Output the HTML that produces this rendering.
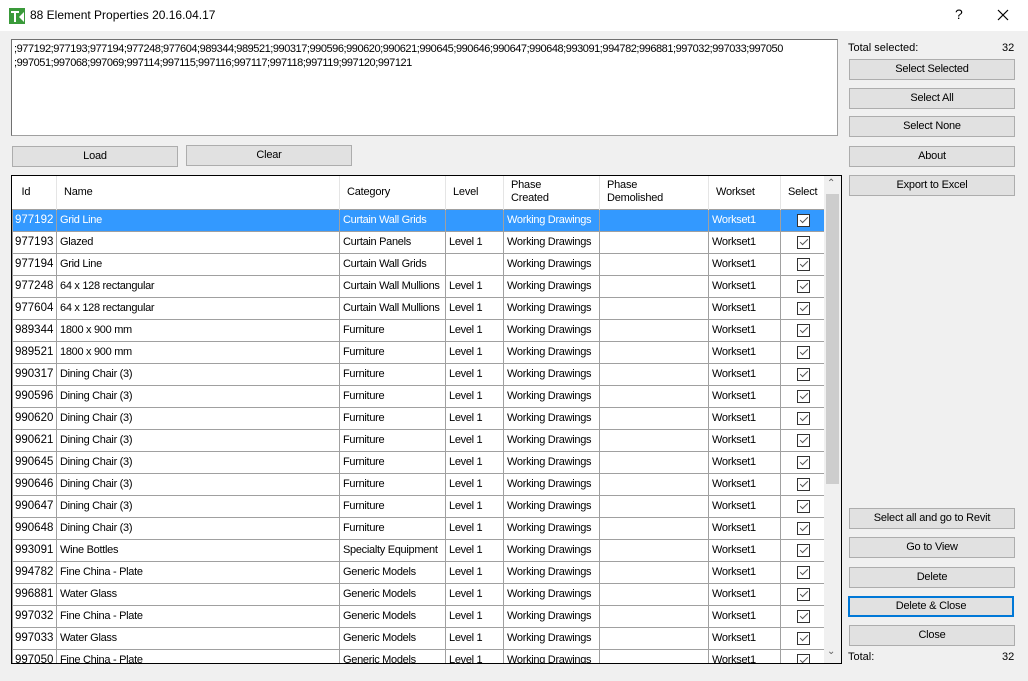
<!DOCTYPE html><html><head><style>
body{margin:0;width:1028px;height:681px;background:#f0f0f0;font-family:"Liberation Sans",sans-serif;font-size:11px;color:#000;position:relative;overflow:hidden}
.a{position:absolute}
.btn{position:absolute;background:#e1e1e1;border:1px solid #adadad;box-sizing:border-box;text-align:center;line-height:18px;letter-spacing:-0.2px}
table{border-collapse:collapse;table-layout:fixed}
td{border:1px solid #a0a0a0;height:22px;padding:0 0 0 3px;white-space:nowrap;overflow:hidden;box-sizing:border-box;letter-spacing:-0.3px}
td.id{letter-spacing:0;font-size:11.5px;padding-left:2px}
th{font-weight:normal;text-align:left;height:33px;padding:0 0 0 7px;border-right:1px solid #e5e5e5;box-sizing:border-box;line-height:13px;letter-spacing:-0.2px}
tr.s td{background:#3399ff;color:#fff}
.cb{display:inline-block;width:13px;height:13px;border:1px solid #333;background:#fff;box-sizing:border-box;position:relative;top:2px}
.cb:after{content:"";position:absolute;left:4px;top:0px;width:3px;height:7px;border:solid #555;border-width:0 1px 1px 0;transform:rotate(45deg)}
</style></head><body>
<div class="a" style="left:0;top:0;width:1028px;height:31px;background:#fff"></div>
<svg class="a" style="left:9px;top:8px" width="16" height="16"><rect width="16" height="16" fill="#3a9a3a"/><path d="M2 3h8v2H7v9H5V5H2z" fill="#fff"/><path d="M10 9l5-5v10z" fill="#fff"/></svg>
<div class="a" style="left:30px;top:8px;font-size:12px">88 Element Properties 20.16.04.17</div>
<div class="a" style="left:955px;top:6px;font-size:14px">?</div>
<svg class="a" style="left:997px;top:9px" width="12" height="12"><path d="M1 1L11 11M11 1L1 11" stroke="#000" stroke-width="1.2"/></svg>
<div class="a" style="left:11px;top:39px;width:827px;height:97px;background:#fff;border:1px solid #a0a0a0;box-sizing:border-box;border-top-color:#707070;border-left-color:#707070;padding:2px 2px;font-size:11px;line-height:14px;white-space:nowrap;overflow:hidden;letter-spacing:-0.45px">;977192;977193;977194;977248;977604;989344;989521;990317;990596;990620;990621;990645;990646;990647;990648;993091;994782;996881;997032;997033;997050<br>;997051;997068;997069;997114;997115;997116;997117;997118;997119;997120;997121</div>
<div class="btn" style="left:12px;top:146px;width:166px;height:21px">Load</div>
<div class="btn" style="left:186px;top:145px;width:166px;height:21px">Clear</div>
<div class="a" style="left:11px;top:175px;width:831px;height:489px;border:1px solid #000;box-sizing:border-box;background:#fff;overflow:hidden">
<table style="width:813px">
<colgroup><col style="width:44px"><col style="width:283px"><col style="width:106px"><col style="width:58px"><col style="width:96px"><col style="width:109px"><col style="width:72px"><col style="width:45px"></colgroup>
<tr><th style="padding-left:9px">Id</th><th>Name</th><th>Category</th><th>Level</th><th>Phase<br>Created</th><th>Phase<br>Demolished</th><th>Workset</th><th>Select</th></tr>
<tbody id="b"></tbody></table>
<div class="a" style="left:812px;top:0;width:17px;height:489px;background:#f0f0f0"></div>
<div class="a" style="left:814px;top:18px;width:13px;height:290px;background:#cdcdcd"></div>
<div class="a" style="left:815px;top:2px;color:#606060;font-size:10px">&#8963;</div>
<div class="a" style="left:815px;top:470px;color:#606060;font-size:10px">&#8964;</div>
</div>
<div class="a" style="left:848px;top:42px">Total selected:</div><div class="a" style="left:1002px;top:42px">32</div>
<div class="btn" style="left:849px;top:59px;width:166px;height:21px">Select Selected</div>
<div class="btn" style="left:849px;top:88px;width:166px;height:21px">Select All</div>
<div class="btn" style="left:849px;top:116px;width:166px;height:21px">Select None</div>
<div class="btn" style="left:849px;top:146px;width:166px;height:21px">About</div>
<div class="btn" style="left:849px;top:175px;width:166px;height:21px">Export to Excel</div>
<div class="btn" style="left:849px;top:508px;width:166px;height:21px">Select all and go to Revit</div>
<div class="btn" style="left:849px;top:537px;width:166px;height:21px">Go to View</div>
<div class="btn" style="left:849px;top:567px;width:166px;height:21px">Delete</div>
<div class="btn" style="left:848px;top:596px;width:166px;height:21px;border:2px solid #0078d7;line-height:16px">Delete &amp; Close</div>
<div class="btn" style="left:849px;top:625px;width:166px;height:21px">Close</div>
<div class="a" style="left:848px;top:651px">Total:</div><div class="a" style="left:1002px;top:651px">32</div>
<script>
var d=[["977192","Grid Line","Curtain Wall Grids",""],["977193","Glazed","Curtain Panels","Level 1"],["977194","Grid Line","Curtain Wall Grids",""],["977248","64 x 128 rectangular","Curtain Wall Mullions","Level 1"],["977604","64 x 128 rectangular","Curtain Wall Mullions","Level 1"],["989344","1800 x 900 mm","Furniture","Level 1"],["989521","1800 x 900 mm","Furniture","Level 1"],["990317","Dining Chair (3)","Furniture","Level 1"],["990596","Dining Chair (3)","Furniture","Level 1"],["990620","Dining Chair (3)","Furniture","Level 1"],["990621","Dining Chair (3)","Furniture","Level 1"],["990645","Dining Chair (3)","Furniture","Level 1"],["990646","Dining Chair (3)","Furniture","Level 1"],["990647","Dining Chair (3)","Furniture","Level 1"],["990648","Dining Chair (3)","Furniture","Level 1"],["993091","Wine Bottles","Specialty Equipment","Level 1"],["994782","Fine China - Plate","Generic Models","Level 1"],["996881","Water Glass","Generic Models","Level 1"],["997032","Fine China - Plate","Generic Models","Level 1"],["997033","Water Glass","Generic Models","Level 1"],["997050","Fine China - Plate","Generic Models","Level 1"]];
var h="";d.forEach(function(r,i){h+='<tr'+(i==0?' class="s"':'')+'><td class="id">'+r[0]+'</td><td>'+r[1]+'</td><td>'+r[2]+'</td><td>'+r[3]+'</td><td>Working Drawings</td><td></td><td>Workset1</td><td style="text-align:center;padding:0"><span class="cb"></span></td></tr>'});
document.getElementById("b").innerHTML=h;
</script>
</body></html>
